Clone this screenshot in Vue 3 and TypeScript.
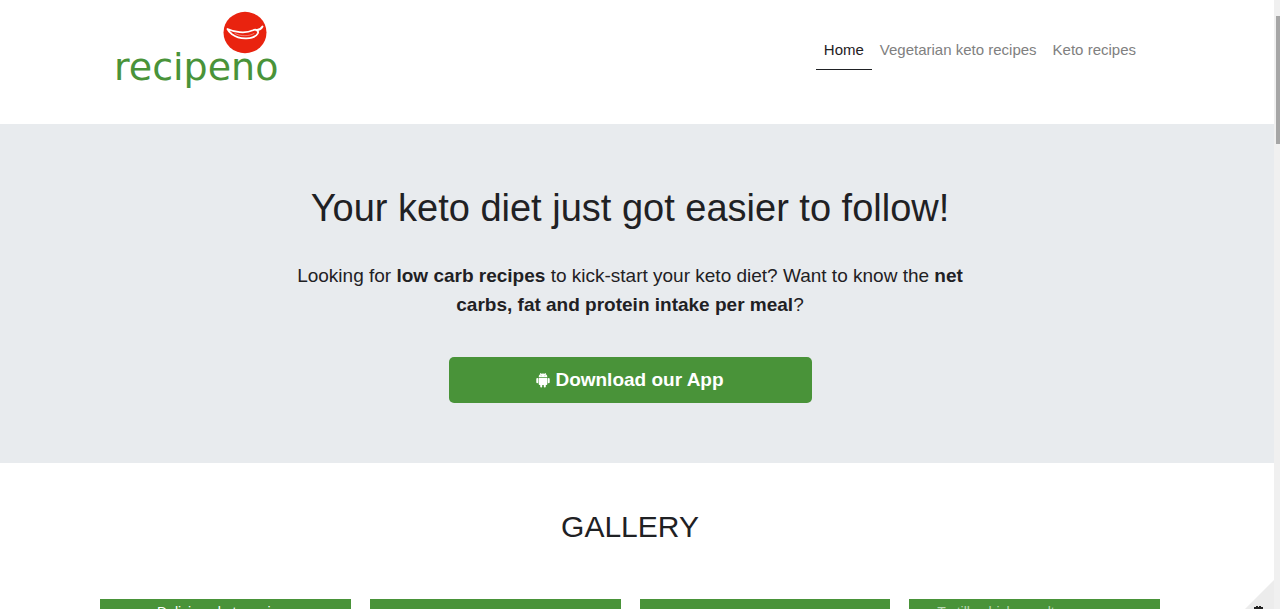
<script setup lang="ts">
interface NavItem { label: string; active: boolean }
interface Card { title: string; soft: boolean }

const nav: NavItem[] = [
  { label: 'Home', active: true },
  { label: 'Vegetarian keto recipes', active: false },
  { label: 'Keto recipes', active: false },
]

const cards: Card[] = [
  { title: 'Delicious keto recipes', soft: false },
  { title: '', soft: false },
  { title: '', soft: false },
  { title: 'Tortilla chicken salt', soft: true },
]
</script>

<template>
  <div class="page">
    <main class="content">
      <header class="header">
        <a class="logo" href="#" aria-label="recipeno">
          <svg class="mark" viewBox="0 0 44 42" aria-hidden="true">
            <ellipse cx="22" cy="21" rx="21.5" ry="20.7" fill="#e9230f" />
            <path d="M4.500 17.500C11 20.500 22 22.500 30 18.800C33 17.200 36 19.200 34.800 21.800C31.500 28 17 28.800 9 22.800C6.500 20.800 5.200 19 4.500 17.500Z" fill="none" stroke="#fff" stroke-width="1.800" stroke-linejoin="round" />
            <path d="M12 22C18 25 26 25 31 22" fill="none" stroke="#fff" stroke-width=".7" stroke-linecap="round" opacity=".6" />
            <path d="M33.500 18.800C36.500 18.500 38.500 17 39.500 15" fill="none" stroke="#fff" stroke-width="1.900" stroke-linecap="round" />
          </svg>
          <span class="wordmark">recipeno</span>
        </a>
        <nav class="nav">
          <a v-for="item in nav" :key="item.label" href="#" :class="{ active: item.active }">{{ item.label }}</a>
        </nav>
      </header>

      <section class="hero">
        <h1>Your keto diet just got easier to follow!</h1>
        <p>Looking for <b>low carb recipes</b> to kick-start your keto diet? Want to know the <b>net carbs, fat and protein intake per meal</b>?</p>
        <a class="download" href="#">
          <svg class="android" viewBox="0 0 14 16" aria-hidden="true">
            <path d="M2.700 5.300a4.300 3.700 0 0 1 8.600 0z" fill="#fff" />
            <path d="M4.300 1l1 1.700M9.700 1l-1 1.700" stroke="#fff" stroke-width=".8" />
            <path d="M2.700 5.900h8.600v6.200q0 .9-.9.900h-6.800q-.9 0-.9-.9z" fill="#fff" />
            <path d="M1.300 6.900v3.300M12.700 6.900v3.300M5.200 12v2.500M8.800 12v2.500" stroke="#fff" stroke-width="2" stroke-linecap="round" />
            <circle cx="5.100" cy="3.800" r=".4" fill="#499339" /><circle cx="8.900" cy="3.800" r=".4" fill="#499339" />
          </svg>
          Download our App
        </a>
      </section>

      <section class="gallery">
        <h2>GALLERY</h2>
        <div class="grid">
          <article v-for="(card, i) in cards" :key="i" class="card" :class="{ soft: card.soft }">
            <h3 v-if="card.title">{{ card.title }}</h3>
          </article>
        </div>
      </section>
      <svg class="corner" viewBox="0 0 29 29" aria-hidden="true">
        <path d="M29 0V29H0Z" fill="#ececec" />
        <path d="M9 29V27h2V26h2v1h1v-1h2v1h2v2z" fill="#222" />
      </svg>
    </main>
    <div class="scrollbar" aria-hidden="true">
      <div class="thumb"></div>
    </div>
  </div>
</template>

<style>
body { margin: 0; }
</style>

<style scoped>
.page {
  display: flex;
  height: 100vh;
  overflow: hidden;
  font-family: "Liberation Sans", Arial, sans-serif;
  color: #1f2124;
  background: #fff;
}
.content { position: relative; flex: 1; min-width: 0; }
.header {
  box-sizing: border-box;
  height: 124px;
  padding: 11px 130px 0 114px;
  display: flex;
  justify-content: space-between;
  align-items: flex-start;
}
.logo {
  display: flex;
  flex-direction: column;
  align-items: flex-end;
  color: #499339;
  text-decoration: none;
}
.mark { width: 44px; height: 43px; margin-right: 11px; }
.wordmark {
  margin-top: -11px;
  font-family: "DejaVu Sans", sans-serif;
  font-size: 38px;
  line-height: 48px;
}
.nav { display: flex; margin-top: 20px; }
.nav a {
  padding: 8px 8px;
  font-size: 15px;
  line-height: 22px;
  color: #808080;
  text-decoration: none;
  border-bottom: 1px solid transparent;
}
.nav .active { color: #1f2124; border-color: #1f2124; }
.hero {
  box-sizing: border-box;
  height: 339px;
  padding: 61px 14px 0 0;
  display: flex;
  flex-direction: column;
  align-items: center;
  text-align: center;
  background: #e8ebee;
}
h1, h2, h3, p { margin: 0; font-weight: 400; }
h1 { font-size: 38px; line-height: 46px; }
p { max-width: 690px; margin-top: 30px; font-size: 19px; line-height: 29px; }
.download {
  box-sizing: border-box;
  width: 363px;
  height: 46px;
  margin-top: 38px;
  display: flex;
  align-items: center;
  justify-content: center;
  gap: 5px;
  border-radius: 5px;
  background: #499339;
  color: #fff;
  font-size: 19px;
  font-weight: 700;
  text-decoration: none;
}
.android { width: 14px; height: 16px; }
.gallery { padding: 46px 114px 0 100px; }
h2 { font-size: 30px; line-height: 36px; text-align: center; }
.grid {
  display: grid;
  grid-template-columns: repeat(4, 1fr);
  gap: 19px;
  margin-top: 54px;
}
.card { height: 250px; background: #499339; color: #fff; }
.card h3 {
  padding: 3px 0 0 57px;
  font-size: 14px;
  line-height: 20px;
}
.soft h3 { padding-left: 28px; color: #b9d8b1; }
.corner { position: absolute; right: 0; bottom: 0; width: 29px; height: 29px; }
.scrollbar {
  box-sizing: border-box;
  width: 6px;
  padding: 16px 0 0 2px;
  background: #f0f0f0;
}
.thumb { height: 128px; background: #a6a6a6; }
</style>
